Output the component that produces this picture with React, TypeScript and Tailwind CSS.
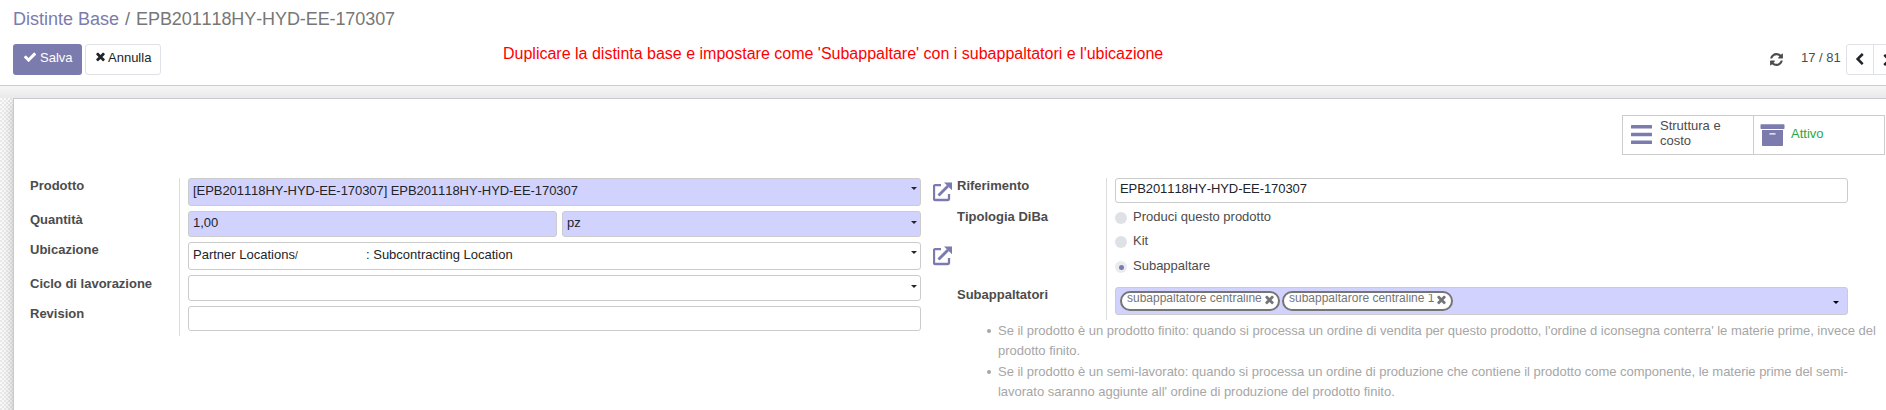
import type { ReactNode } from "react";

const CHECK =
  "M1671 566q0 40-28 68l-724 724-136 136q-28 28-68 28t-68-28l-136-136-362-362q-28-28-28-68t28-68l136-136q28-28 68-28t68 28l294 295 656-657q28-28 68-28t68 28l136 136q28 28 28 68z";
const TIMES =
  "M1490 1322q0 40-28 68l-136 136q-28 28-68 28t-68-28l-294-294-294 294q-28 28-68 28t-68-28l-136-136q-28-28-28-68t28-68l294-294-294-294q-28-28-28-68t28-68l136-136q28-28 68-28t68 28l294 294 294-294q28-28 68-28t68 28l136 136q28 28 28 68t-28 68l-294 294 294 294q28 28 28 68z";
const REFRESH =
  "M1639 1056q0 5-1 7-64 268-268 434.5t-478 166.5q-146 0-282.5-55t-243.5-157l-129 129q-19 19-45 19t-45-19-19-45v-448q0-26 19-45t45-19h448q26 0 45 19t19 45-19 45l-137 137q71 66 161 102t187 36q134 0 250-65t186-179q11-17 53-117 8-23 30-23h192q13 0 22.5 9.5t9.5 22.5zm25-800v448q0 26-19 45t-45 19h-448q-26 0-45-19t-19-45 19-45l138-138q-148-137-349-137-134 0-250 65t-186 179q-11 17-53 117-8 23-30 23h-199q-13 0-22.5-9.5t-9.5-22.5v-7q65-268 270-434.5t480-166.5q146 0 284 55.5t245 156.5l130-129q19-19 45-19t45 19 19 45z";
const CHEVRON =
  "M1427 301l-531 531 531 531q19 19 19 45t-19 45l-166 166q-19 19-45 19t-45-19l-742-742q-19-19-19-45t19-45l742-742q19-19 45-19t45 19l166 166q19 19 19 45t-19 45z";

function Glyph({ d, className }: { d: string; className: string }) {
  return (
    <svg viewBox="0 0 1792 1792" fill="currentColor" className={`shrink-0 ${className}`}>
      <path d={d} />
    </svg>
  );
}

function Caret({ className }: { className: string }) {
  return (
    <svg viewBox="0 0 6 3" fill="currentColor" className={`h-[3px] w-[6px] shrink-0 ${className}`}>
      <path d="M0 0h6L3 3z" />
    </svg>
  );
}

function ExternalLink({ className }: { className: string }) {
  return (
    <svg viewBox="0 0 19 20" fill="none" stroke="currentColor" className={`h-5 w-[19px] shrink-0 text-[#7c7bad] ${className}`}>
      <path d="M8 3.2H2a1 1 0 0 0-1 1V17a1 1 0 0 0 1 1h13a1 1 0 0 0 1-1v-5" strokeWidth="2.3" />
      <path d="M5.5 13.5L15 4" strokeWidth="2.9" />
      <path d="M11 0.5H19V8.2z" fill="currentColor" stroke="none" />
    </svg>
  );
}

function Row({ label, className, labelClass = "", children }: { label: string; className: string; labelClass?: string; children?: ReactNode }) {
  return (
    <div className={`flex ${className}`}>
      <div className={`w-[149px] shrink-0 font-bold text-[#4c4c4c] ${labelClass}`}>{label}</div>
      <div className="flex grow items-start border-l border-[#ddd] pl-2">{children}</div>
    </div>
  );
}

function Field({ className, children }: { className: string; children?: ReactNode }) {
  return (
    <div className={`flex shrink-0 items-start justify-between rounded-[3px] border border-[#ccc] pr-[3px] pl-1 text-[#212529] ${className}`}>{children}</div>
  );
}

function Radio({ label, checked = false, className }: { label: string; checked?: boolean; className: string }) {
  return (
    <div className={`flex items-start ${className}`}>
      <span className={`mt-[3px] mr-[6px] flex size-3 items-center justify-center rounded-full ${checked ? "bg-[#e9ecef]" : "bg-[#dee2e6]"}`}>
        {checked && <span className="size-[5px] rounded-full bg-[#7c7bad]" />}
      </span>
      {label}
    </div>
  );
}

function Tag({ label, className }: { label: string; className: string }) {
  return (
    <span className={`flex h-5 items-start overflow-hidden rounded-full border-2 border-[#757575] bg-white pl-[5px] text-[12px] text-[#757575] ${className}`}>
      <span className="mt-px h-[14px] shrink-0 overflow-hidden">
        <span className="-mt-[3px] block whitespace-nowrap">{label}</span>
      </span>
      <Glyph d={TIMES} className="ml-px size-[13px]" />
    </span>
  );
}

export default function App() {
  return (
    <div className="flex h-[410px] w-[1886px] flex-col overflow-hidden bg-white font-['Liberation_Sans',sans-serif] text-[13px] leading-[15px] text-[#4c4c4c] [font-kerning:none]">
      <header className="h-[86px] shrink-0 border-b border-[#ccc] px-[13px]">
        <div className="flex h-11 items-start pt-[9px] text-[18px] leading-[20px] text-[#777]">
          <span className="text-[#7c7bad]">Distinte Base</span>
          <span className="px-[6px] text-[#6c757d]">/</span>
          <span className="tracking-[-0.09px]">EPB201118HY-HYD-EE-170307</span>
        </div>
        <div className="flex w-[1890px] items-start">
          <button className="flex h-[31px] w-[69px] items-start rounded-[3px] bg-[#7c7bad] pt-[6px] pl-[10px] text-white">
            <Glyph d={CHECK} className="mr-[3px] size-[14px]" />
            Salva
          </button>
          <button className="ml-[3px] flex h-[31px] w-[76px] items-start rounded-[3px] border border-[#dee2e6] pt-[5px] pl-2 text-[#212529]">
            <Glyph d={TIMES} className="mr-[1px] size-[13px]" />
            Annulla
          </button>
          <div className="ml-[342px] w-[680px] text-[16px] leading-[20px] whitespace-nowrap text-[#f00]">
            Duplicare la distinta base e impostare come 'Subappaltare' con i subappaltatori e l'ubicazione
          </div>
          <div className="ml-[586px] flex items-start">
            <Glyph d={REFRESH} className="mt-2 size-[15px]" />
            <span className="mt-[6px] ml-[17px] w-[45px] whitespace-nowrap">17 / 81</span>
            <div className="flex h-[31px] rounded-[3px] border border-[#dee2e6] text-[#212529]">
              <div className="flex w-[27px] items-center justify-center border-r border-[#dee2e6]">
                <Glyph d={CHEVRON} className="mr-px size-[13px]" />
              </div>
              <div className="flex w-[27px] items-center justify-center">
                <Glyph d={CHEVRON} className="size-[13px] rotate-180" />
              </div>
            </div>
          </div>
        </div>
      </header>
      <div className="h-3 shrink-0 bg-linear-to-b from-[#f6f6f6] to-[#e9e9e9]" />
      <div className="flex grow overflow-hidden bg-[conic-gradient(#e9e9e9_25%,#fafafa_0_50%,#e9e9e9_0_75%,#fafafa_0)] bg-[length:4px_4px] pl-[13px]">
        <main className="h-[340px] w-[1890px] shrink-0 border-t border-l border-[#c8c8d3] bg-white pl-4 shadow-[0_0_14px_-4px_rgba(0,0,0,0.4)]">
          <div className="flex h-[79px] pt-4 pl-[1592px]">
            <div className="flex h-10 w-[263px] shrink-0 border border-[#ccc]">
              <div className="flex w-[131px] border-r border-[#ccc] pl-2">
                <svg viewBox="0 0 21 19" fill="#7c7bad" className="mt-[9px] h-[19px] w-[21px]">
                  <rect width="21" height="3.5" rx=".5" />
                  <rect y="7.7" width="21" height="3.5" rx=".5" />
                  <rect y="15.4" width="21" height="3.5" rx=".5" />
                </svg>
                <span className="mt-[2px] ml-2 w-[70px]">Struttura e costo</span>
              </div>
              <div className="flex pl-[6px]">
                <svg viewBox="0 0 25 22" fill="#7c7bad" className="mt-2 h-[22px] w-[25px]">
                  <rect x=".5" y=".3" width="24" height="4.7" rx=".7" />
                  <path fillRule="evenodd" d="M2 6h21v15.3q0 .7-.7.7H2.7q-.7 0-.7-.7zM10 9.2q-.7 0-.7.7t.7.7h5q.7 0 .7-.7t-.7-.7z" />
                </svg>
                <span className="mt-[10px] ml-[6px] text-[#28a745]">Attivo</span>
              </div>
            </div>
          </div>
          <div className="flex">
            <section className="w-[927px] shrink-0">
              <Row label="Prodotto" className="h-[33px]">
                <Field className="h-[28px] w-[733px] bg-[#d2d2ff] pt-1">
                  <span className="tracking-[-0.06px]">[EPB201118HY-HYD-EE-170307] EPB201118HY-HYD-EE-170307</span>
                  <Caret className="mt-1" />
                </Field>
                <ExternalLink className="mt-1 ml-3" />
              </Row>
              <Row label="Quantità" className="h-[31px]" labelClass="pt-px">
                <Field className="h-[26px] w-[369px] bg-[#d2d2ff] pt-[3px]">1,00</Field>
                <Field className="ml-[5px] h-[26px] w-[359px] bg-[#d2d2ff] pt-[3px]">
                  <span>pz</span>
                  <Caret className="mt-[6px]" />
                </Field>
              </Row>
              <Row label="Ubicazione" className="h-[33px]">
                <Field className="h-[28px] w-[733px] pt-1">
                  <span className="flex">
                    <span className="w-[173px] shrink-0">
                      Partner Locations<span className="text-[10px]">/</span>
                    </span>
                    <span>: Subcontracting Location</span>
                  </span>
                  <Caret className="mt-1" />
                </Field>
                <ExternalLink className="mt-1 ml-3" />
              </Row>
              <Row label="Ciclo di lavorazione" className="h-[31px]" labelClass="pt-px">
                <Field className="h-[26px] w-[733px] pt-[3px]">
                  <span />
                  <Caret className="mt-[6px]" />
                </Field>
              </Row>
              <Row label="Revision" className="h-[30px]">
                <Field className="h-[25px] w-[733px]" />
              </Row>
            </section>
            <section className="w-[920px] shrink-0">
              <Row label="Riferimento" className="h-[31px]">
                <Field className="h-[25px] w-[733px] pt-[2px] tracking-[-0.07px]">EPB201118HY-HYD-EE-170307</Field>
              </Row>
              <Row label="Tipologia DiBa" className="h-[78px]">
                <div>
                  <Radio label="Produci questo prodotto" className="h-6" />
                  <Radio label="Kit" className="h-[25px]" />
                  <Radio label="Subappaltare" checked className="h-6" />
                </div>
              </Row>
              <Row label="Subappaltatori" className="h-[33px]">
                <Field className="h-[28px] w-[733px] bg-[#d2d2ff] pt-[3px]">
                  <span className="flex gap-[2px]">
                    <Tag label="subappaltatore centraline" className="w-[160px]" />
                    <Tag label="subappaltarore centraline 1" className="w-[171px]" />
                  </span>
                  <Caret className="mt-[10px] mr-[5px] text-black" />
                </Field>
              </Row>
              <ul className="list-none pl-[30px] tracking-[-0.015px] text-[#a6a6a6]">
                <li className="flex h-[41px] pt-px leading-[20px]">
                  <span className="mt-[8px] mr-[7px] size-[4px] shrink-0 rounded-full bg-[#a6a6a6]" />
                  <span className="whitespace-nowrap">
                    Se il prodotto è un prodotto finito: quando si processa un ordine di vendita per questo prodotto, l'ordine d iconsegna conterra' le materie prime, invece del
                    <br />
                    prodotto finito.
                  </span>
                </li>
                <li className="flex pt-px leading-[20px]">
                  <span className="mt-[8px] mr-[7px] size-[4px] shrink-0 rounded-full bg-[#a6a6a6]" />
                  <span className="whitespace-nowrap">
                    Se il prodotto è un semi-lavorato: quando si processa un ordine di produzione che contiene il prodotto come componente, le materie prime del semi-
                    <br />
                    lavorato saranno aggiunte all' ordine di produzione del prodotto finito.
                  </span>
                </li>
              </ul>
            </section>
          </div>
        </main>
      </div>
    </div>
  );
}
